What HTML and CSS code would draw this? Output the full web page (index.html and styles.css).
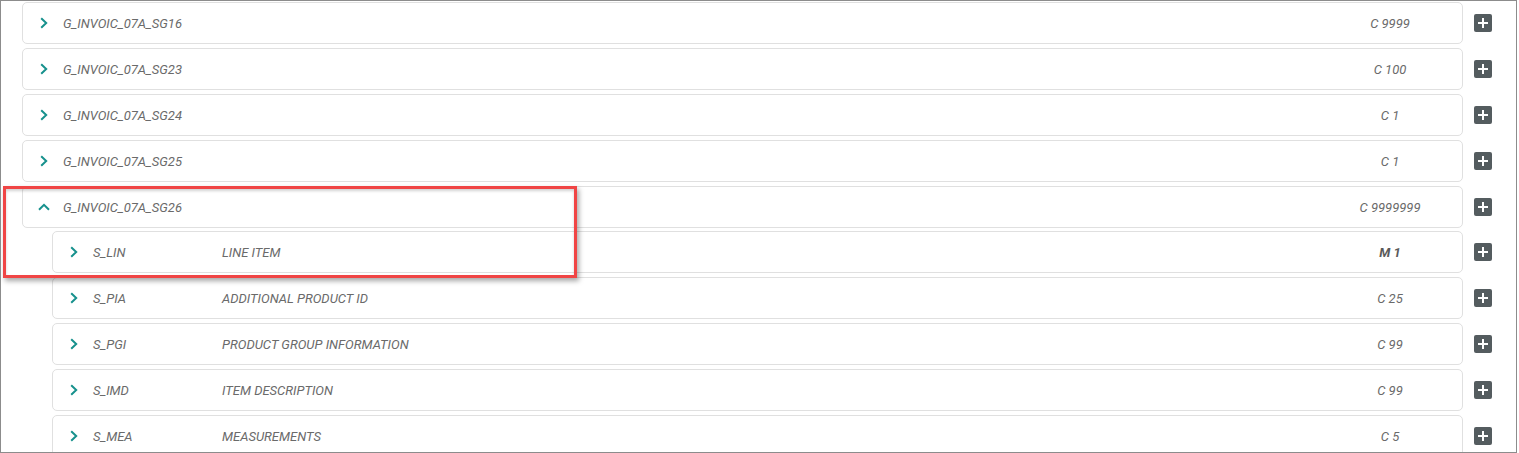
FILE: index.html
```html
<!DOCTYPE html>
<html>
<head>
<meta charset="utf-8">
<link rel="stylesheet" href="styles.css">
</head>
<body>
<div class="frame">
  <div class="list">
    <div class="row">
      <div class="item">
        <span class="chev"><svg viewBox="0 0 8 12" width="8" height="12"><path d="M1.2 1.2 L6.2 6 L1.2 10.8" /></svg></span>
        <span class="name">G_INVOIC_07A_SG16</span>
        <span class="card">C 9999</span>
      </div>
      <span class="plus"></span>
    </div>
    <div class="row">
      <div class="item">
        <span class="chev"><svg viewBox="0 0 8 12" width="8" height="12"><path d="M1.2 1.2 L6.2 6 L1.2 10.8" /></svg></span>
        <span class="name">G_INVOIC_07A_SG23</span>
        <span class="card">C 100</span>
      </div>
      <span class="plus"></span>
    </div>
    <div class="row">
      <div class="item">
        <span class="chev"><svg viewBox="0 0 8 12" width="8" height="12"><path d="M1.2 1.2 L6.2 6 L1.2 10.8" /></svg></span>
        <span class="name">G_INVOIC_07A_SG24</span>
        <span class="card">C 1</span>
      </div>
      <span class="plus"></span>
    </div>
    <div class="row">
      <div class="item">
        <span class="chev"><svg viewBox="0 0 8 12" width="8" height="12"><path d="M1.2 1.2 L6.2 6 L1.2 10.8" /></svg></span>
        <span class="name">G_INVOIC_07A_SG25</span>
        <span class="card">C 1</span>
      </div>
      <span class="plus"></span>
    </div>
    <div class="row">
      <div class="item">
        <span class="chev"><svg viewBox="0 0 12 8" width="12" height="8"><path d="M1 6.8 L6 1.8 L11 6.8" /></svg></span>
        <span class="name">G_INVOIC_07A_SG26</span>
        <span class="card">C 9999999</span>
      </div>
      <span class="plus"></span>
    </div>
    <div class="row child first">
      <div class="item">
        <span class="chev"><svg viewBox="0 0 8 12" width="8" height="12"><path d="M1.2 1.2 L6.2 6 L1.2 10.8" /></svg></span>
        <span class="code">S_LIN</span>
        <span class="desc">LINE ITEM</span>
        <span class="card bold">M 1</span>
      </div>
      <span class="plus"></span>
    </div>
    <div class="row child">
      <div class="item">
        <span class="chev"><svg viewBox="0 0 8 12" width="8" height="12"><path d="M1.2 1.2 L6.2 6 L1.2 10.8" /></svg></span>
        <span class="code">S_PIA</span>
        <span class="desc">ADDITIONAL PRODUCT ID</span>
        <span class="card">C 25</span>
      </div>
      <span class="plus"></span>
    </div>
    <div class="row child">
      <div class="item">
        <span class="chev"><svg viewBox="0 0 8 12" width="8" height="12"><path d="M1.2 1.2 L6.2 6 L1.2 10.8" /></svg></span>
        <span class="code">S_PGI</span>
        <span class="desc">PRODUCT GROUP INFORMATION</span>
        <span class="card">C 99</span>
      </div>
      <span class="plus"></span>
    </div>
    <div class="row child">
      <div class="item">
        <span class="chev"><svg viewBox="0 0 8 12" width="8" height="12"><path d="M1.2 1.2 L6.2 6 L1.2 10.8" /></svg></span>
        <span class="code">S_IMD</span>
        <span class="desc">ITEM DESCRIPTION</span>
        <span class="card">C 99</span>
      </div>
      <span class="plus"></span>
    </div>
    <div class="row child">
      <div class="item">
        <span class="chev"><svg viewBox="0 0 8 12" width="8" height="12"><path d="M1.2 1.2 L6.2 6 L1.2 10.8" /></svg></span>
        <span class="code">S_MEA</span>
        <span class="desc">MEASUREMENTS</span>
        <span class="card">C 5</span>
      </div>
      <span class="plus"></span>
    </div>
  </div>
  <div class="highlight"></div>
</div>
</body>
</html>
```

FILE: styles.css
```css
html, body {
  margin: 0;
  padding: 0;
  background: #ffffff;
}

.frame {
  position: relative;
  box-sizing: border-box;
  width: 1517px;
  height: 453px;
  border: 1px solid #8c8c8c;
  overflow: hidden;
  background: #ffffff;
  font-family: Roboto, "Liberation Sans", sans-serif;
}

.list {
  display: flex;
  flex-direction: column;
  gap: 4px;
  padding: 1px 24px 0 21px;
}

.row {
  display: flex;
  align-items: center;
}

.row.child {
  padding-left: 30px;
}

.row.first {
  margin-top: -1px;
}

.item {
  flex: 1;
  box-sizing: border-box;
  height: 42px;
  border: 1px solid #e0e0e0;
  border-radius: 5px;
  background: #fff;
  display: flex;
  align-items: center;
  padding-left: 15px;
  font-size: 13px;
  font-style: italic;
  color: #6a6a6a;
}

.chev {
  width: 12px;
  height: 12px;
  display: flex;
  align-items: center;
  justify-content: center;
  margin-right: 13px;
}

.chev svg path {
  fill: none;
  stroke: #17918d;
  stroke-width: 2;
  stroke-linecap: butt;
  stroke-linejoin: miter;
}

.name {
  flex: 1;
}

.code {
  width: 129px;
}

.desc {
  flex: 1;
}

.card {
  width: 120px;
  text-align: center;
  margin-right: 12px;
}

.card.bold {
  font-weight: 700;
  color: #5a5a5a;
}

.plus {
  position: relative;
  width: 18px;
  height: 18px;
  margin-left: 11px;
  border-radius: 2px;
  background: #545c5f;
  flex: none;
}

.plus::before,
.plus::after {
  content: "";
  position: absolute;
  background: #ffffff;
  left: 50%;
  top: 50%;
  transform: translate(-50%, -50%);
}

.plus::before {
  width: 10px;
  height: 2px;
}

.plus::after {
  width: 2px;
  height: 10px;
}

.highlight {
  position: absolute;
  left: 2px;
  top: 185px;
  width: 574px;
  height: 92px;
  box-sizing: border-box;
  border: 3px solid #f04545;
  box-shadow: 2px 3px 5px rgba(0, 0, 0, 0.35), inset 0 2px 3px rgba(0, 0, 0, 0.18);
  pointer-events: none;
}
```
